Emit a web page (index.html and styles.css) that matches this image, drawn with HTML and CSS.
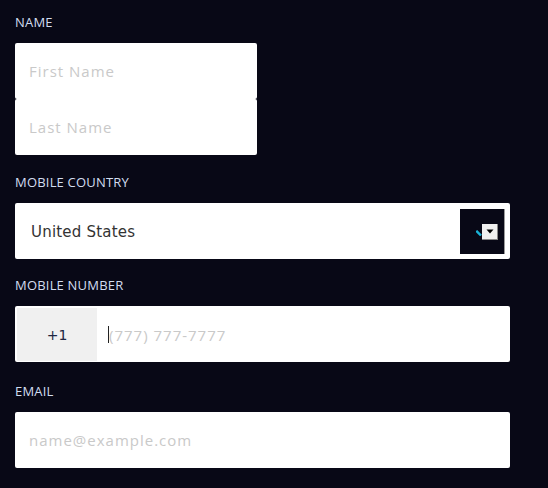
FILE: index.html
```html
<!DOCTYPE html>
<html>
<head>
<meta charset="utf-8">
<link rel="stylesheet" href="styles.css">
</head>
<body>
<form class="form">
  <div class="group">
    <div class="label">NAME</div>
    <div class="stack">
      <div class="field field-half"><span class="ph">First Name</span></div>
      <div class="field field-half"><span class="ph">Last Name</span></div>
    </div>
  </div>
  <div class="group group-country">
    <div class="label">MOBILE COUNTRY</div>
    <div class="field field-full select">
      <span class="value">United States</span>
      <span class="arrow-box">
        <svg class="tick" width="6" height="6" viewBox="0 0 6 6"><path d="M0.3 0.8 L5 5.5" stroke="#19b4d8" stroke-width="2.4"/></svg>
        <span class="arrow-btn"><svg width="8" height="5" viewBox="0 0 8 5"><path d="M0.5 0.5 H7.5 L4 4.5 Z" fill="#000"/></svg></span>
      </span>
    </div>
  </div>
  <div class="group">
    <div class="label">MOBILE NUMBER</div>
    <div class="field field-full phone">
      <span class="prefix">+1</span>
      <span class="caret"></span><span class="ph ph-phone">(777) 777-7777</span>
    </div>
  </div>
  <div class="group group-email">
    <div class="label">EMAIL</div>
    <div class="field field-full"><span class="ph">name@example.com</span></div>
  </div>
</form>
</body>
</html>
```
FILE: styles.css
```css
html, body {
  margin: 0;
  padding: 0;
  background: #080816;
}
.form {
  padding: 14px 0 0 15px;
  display: flex;
  flex-direction: column;
  gap: 18px;
}
.group {
  display: flex;
  flex-direction: column;
}
.group-country { margin-top: 1px; }
.group-email { margin-top: 3px; }
.label {
  font-family: "Open Sans", sans-serif;
  font-size: 13px;
  line-height: 16px;
  letter-spacing: 0.2px;
  color: #d2ddf0;
  margin-bottom: 13px;
}
.stack {
  display: flex;
  flex-direction: column;
}
.field {
  background: #fff;
  height: 56px;
  border-radius: 2px;
  display: flex;
  align-items: center;
  box-sizing: border-box;
}
.field-half { width: 242px; }
.field-full { width: 495px; }
.ph {
  font-family: "Open Sans", sans-serif;
  font-size: 15px;
  letter-spacing: 1px;
  color: #c9c9c9;
  padding-left: 14px;
}
.select {
  padding: 6px 5px 5px 16px;
  justify-content: space-between;
  align-items: stretch;
}
.value {
  font-family: "DejaVu Sans", sans-serif;
  font-size: 15px;
  letter-spacing: 0.2px;
  color: #333;
  display: flex;
  align-items: center;
}
.arrow-box {
  width: 45px;
  box-sizing: border-box;
  background: #080816;
  border-right: 1px solid #9a9a9a;
  display: flex;
  align-items: center;
  justify-content: flex-end;
  padding-right: 6px;
}
.tick { margin-top: 3px; }
.arrow-btn {
  width: 16px;
  height: 16px;
  box-sizing: border-box;
  background: #f0f0f0;
  border-right: 1px solid #888;
  border-bottom: 1px solid #888;
  display: flex;
  align-items: center;
  justify-content: center;
}
.phone {
  padding: 2px 0 1px 2px;
  align-items: stretch;
}
.prefix {
  width: 80px;
  background: #f0f0f0;
  font-family: "DejaVu Sans", sans-serif;
  font-size: 14px;
  color: #1e2642;
  display: flex;
  align-items: center;
  justify-content: center;
}
.caret {
  width: 1px;
  height: 17px;
  background: #222;
  align-self: center;
  margin-left: 11px;
}
.ph-phone {
  padding-left: 0;
  display: flex;
  align-items: center;
}
```
